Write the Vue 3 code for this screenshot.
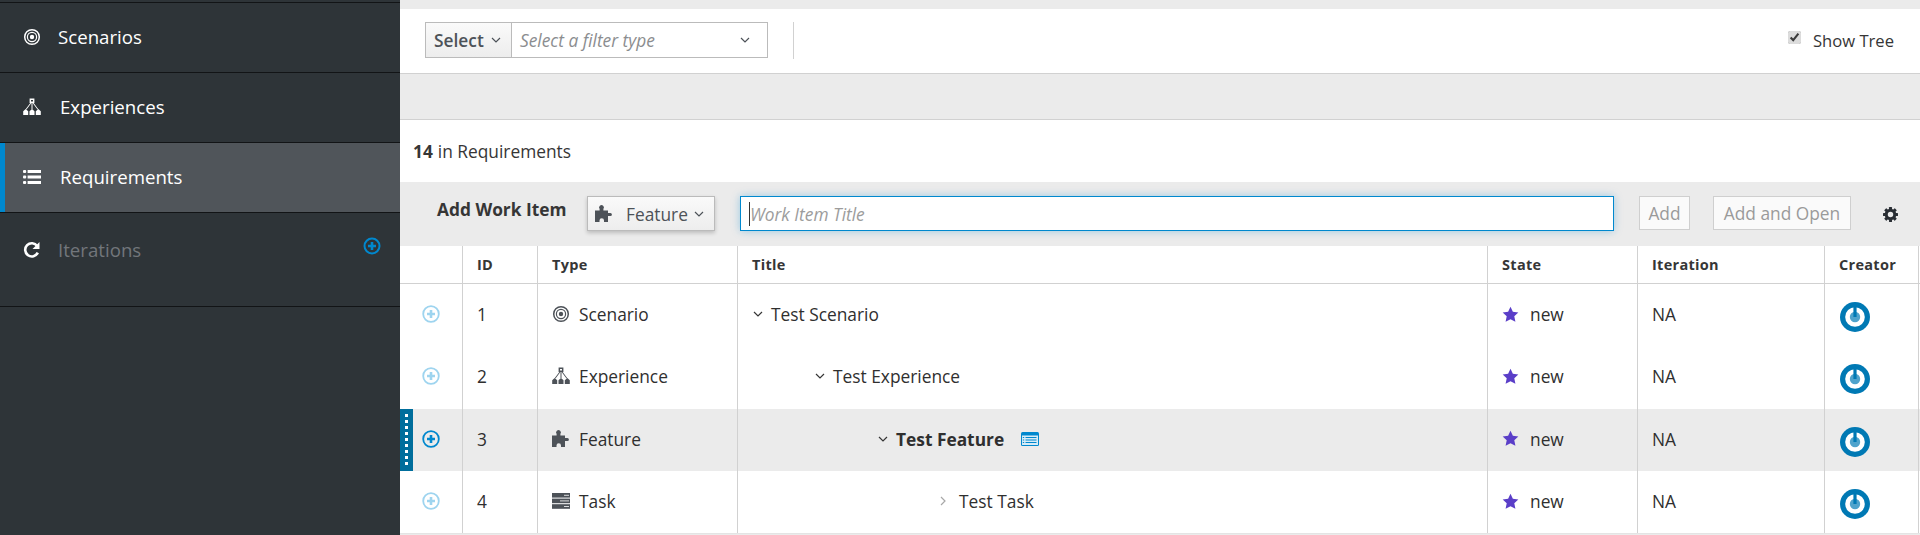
<script setup>
const nav = [
  { label: 'Scenarios', icon: 'target', height: 70 },
  { label: 'Experiences', icon: 'sitemap', height: 70 },
  { label: 'Requirements', icon: 'list', height: 70, active: true },
  { label: 'Iterations', icon: 'repeat', height: 94, muted: true }
];

const columns = ['', 'ID', 'Type', 'Title', 'State', 'Iteration', 'Creator'];

const rows = [
  { id: 1, type: 'Scenario', icon: 'target', title: 'Test Scenario', indent: 0 },
  { id: 2, type: 'Experience', icon: 'sitemap', title: 'Test Experience', indent: 1 },
  { id: 3, type: 'Feature', icon: 'puzzle', title: 'Test Feature', indent: 2, selected: true },
  { id: 4, type: 'Task', icon: 'task', title: 'Test Task', indent: 3, leaf: true }
];

const teeth = [0, 45, 90, 135, 180, 225, 270, 315];
</script>

<template>
  <div class="page">
    <aside class="sidebar">
      <div class="nav-list">
        <div v-for="item in nav" :key="item.label" class="nav-item"
          :class="{ active: item.active, muted: item.muted, ['h' + item.height]: true }">
          <svg class="nav-icon" viewBox="0 0 20 20">
            <use :href="'#i-' + item.icon" />
          </svg>
          <span class="nav-label" :class="item.icon">{{ item.label }}</span>
          <svg v-if="item.muted" class="nav-plus" viewBox="0 0 18 18">
            <circle cx="9" cy="9" r="7.5" fill="none" stroke="currentColor" stroke-width="2" />
            <path d="M9 5v8M5 9h8" stroke="currentColor" stroke-width="2.6" />
          </svg>
        </div>
      </div>
    </aside>

    <main class="content">
      <section class="toolbar">
        <div class="filter">
          <div class="filter-select">Select
            <svg class="chev" viewBox="0 0 10 6"><path d="M1 1l4 4 4-4" /></svg>
          </div>
          <div class="filter-type">
            <span>Select a filter type</span>
            <svg class="chev" viewBox="0 0 10 6"><path d="M1 1l4 4 4-4" /></svg>
          </div>
        </div>
        <div class="divider"></div>
        <label class="show-tree">
          <input type="checkbox" checked />
          <span>Show Tree</span>
        </label>
      </section>

      <div class="band"></div>

      <div class="count"><b>14</b> in Requirements</div>

      <section class="add-bar">
        <span class="add-title">Add Work Item</span>
        <div class="type-btn">
          <svg class="type-icon" viewBox="0 0 20 20"><use href="#i-puzzle" /></svg>
          <span>Feature</span>
          <svg class="chev" viewBox="0 0 10 6"><path d="M1 1l4 4 4-4" /></svg>
        </div>
        <div class="title-input"><i class="caret"></i><span>Work Item Title</span></div>
        <div class="ghost-btn add">Add</div>
        <div class="ghost-btn open">Add and Open</div>
        <svg class="gear" viewBox="0 0 20 20">
          <circle cx="10" cy="10" r="5" fill="none" stroke="currentColor" stroke-width="3.6" />
          <rect v-for="a in teeth" :key="a" x="8.2" y="1.2" width="3.6" height="4" rx="0.6" fill="currentColor"
            :transform="`rotate(${a} 10 10)`" />
        </svg>
      </section>

      <div class="table">
        <div class="row head">
          <div v-for="(c, i) in columns" :key="i" class="cell">{{ c }}</div>
        </div>
        <div v-for="r in rows" :key="r.id" class="row item" :class="{ selected: r.selected }">
          <div class="cell plus-cell">
            <span v-if="r.selected" class="grip"></span>
            <svg class="row-plus" viewBox="0 0 18 18">
              <circle cx="9" cy="9" r="7.8" fill="none" stroke="currentColor" stroke-width="1.8" />
              <path d="M9 5v8M5 9h8" stroke="currentColor" stroke-width="2.6" />
            </svg>
          </div>
          <div class="cell">{{ r.id }}</div>
          <div class="cell type-cell">
            <svg class="row-icon" viewBox="0 0 20 20"><use :href="'#i-' + r.icon" /></svg>
            <span>{{ r.type }}</span>
          </div>
          <div class="cell title-cell" :class="'indent' + r.indent">
            <svg v-if="r.leaf" class="tree-toggle leaf" viewBox="0 0 6 10"><path d="M1 1l4 4-4 4" /></svg>
            <svg v-else class="tree-toggle" viewBox="0 0 10 6"><path d="M1 1l4 4 4-4" /></svg>
            <span class="title-text">{{ r.title }}</span>
            <svg v-if="r.selected" class="detail" viewBox="0 0 18 14">
              <rect width="18" height="14" rx="1.5" fill="#0088ce" />
              <rect x="1" y="3.5" width="16" height="9.5" fill="#d7ecf7" />
              <path d="M4.5 5.5h11M4.5 8h11M4.5 10.5h11M1.8 5.5h1.4M1.8 8h1.4M1.8 10.5h1.4" stroke="#0088ce" stroke-width="1" />
            </svg>
          </div>
          <div class="cell state-cell">
            <svg class="star" viewBox="0 0 18 18">
              <path d="M9 .8l2.5 5.4 5.8.7-4.3 4 1.2 5.9L9 13.9l-5.2 2.9L5 10.9.7 6.9l5.8-.7z" />
            </svg>
            <span>new</span>
          </div>
          <div class="cell">NA</div>
          <div class="cell creator-cell">
            <svg class="avatar" viewBox="0 0 30 30">
              <circle cx="15" cy="15" r="15" fill="#0079b4" />
              <circle cx="15" cy="15" r="9.8" fill="#fff" />
              <circle cx="15" cy="15" r="5.2" fill="#4fa3cc" />
              <path d="M15 5V15" stroke="#0079b4" stroke-width="3.2" />
            </svg>
          </div>
          <div class="cell end"></div>
        </div>
      </div>
    </main>

    <svg class="defs" aria-hidden="true">
      <defs>
        <g id="i-target">
          <circle cx="10" cy="10" r="7.3" fill="none" stroke="currentColor" stroke-width="1.5" />
          <circle cx="10" cy="10" r="4.6" fill="none" stroke="currentColor" stroke-width="1.2" />
          <circle cx="10" cy="10" r="2.2" fill="currentColor" />
        </g>
        <g id="i-sitemap" fill="currentColor">
          <path d="M7.6 1.5h4.8v4.4H7.6zM9 3v1.5h2V3z" fill-rule="evenodd" />
          <path d="M9.5 5.5h1v6.5h-1z" />
          <path d="M8.5 5.7l-4.7 6.4.7.5 4.7-6.4zM11.5 5.7l4.7 6.4-.7.5-4.7-6.4z" />
          <path d="M3.7 12l2.5 2.3V18H1.2v-3.7zM10 12l2.5 2.3V18h-5v-3.7zM16.3 12l2.5 2.3V18h-5v-3.7z" />
        </g>
        <g id="i-list" fill="currentColor">
          <rect x="1" y="3" width="3.2" height="3" rx="1" />
          <rect x="1" y="8.5" width="3.2" height="3" rx="1" />
          <rect x="1" y="14" width="3.2" height="3" rx="1" />
          <rect x="5.6" y="3" width="13.4" height="3" />
          <rect x="5.6" y="8.5" width="13.4" height="3" />
          <rect x="5.6" y="14" width="13.4" height="3" />
        </g>
        <g id="i-repeat">
          <path d="M15.2 6A6.6 6.6 0 1 0 15.8 12.6" fill="none" stroke="currentColor" stroke-width="2.6" />
          <path d="M17.5 2v7h-7z" fill="currentColor" />
        </g>
        <g id="i-puzzle" fill="currentColor">
          <path d="M1 6.5h4.6V5a2.4 2.4 0 1 1 3.8 0v1.5H14V9h2.4a1.5 1.5 0 1 1 0 3H14v6h-4v-1.5a2.2 2.2 0 0 0-4.5 0V18H1z" />
        </g>
        <g id="i-task">
          <rect x="1" y="2" width="18" height="4.6" fill="currentColor" />
          <rect x="1" y="7.6" width="18" height="4.6" fill="currentColor" />
          <rect x="1" y="13.2" width="18" height="4.6" fill="currentColor" />
          <path d="M13 4.3h5M9 9.9h9M13 15.5h5" stroke="#fff" stroke-width="1" opacity="0.8" />
        </g>
      </defs>
    </svg>
  </div>
</template>

<style>
html, body {
  margin: 0;
  background: #fff;
}
</style>

<style scoped>
.page {
  display: flex;
  width: 1920px;
  height: 535px;
  overflow: hidden;
  font-family: "Open Sans", "Liberation Sans", sans-serif;
  color: #363636;
}

.defs {
  position: absolute;
  width: 0;
  height: 0;
}

.sidebar {
  width: 400px;
  flex: none;
  background: #2e3438;
  padding-top: 2px;
  box-sizing: border-box;
}

.nav-list {
  border-top: 1px solid #121416;
}

.nav-item {
  display: flex;
  align-items: center;
  box-sizing: border-box;
  border-bottom: 1px solid #121416;
  padding: 0 0 2px 22px;
  position: relative;
  color: #fff;
  font-size: 18.67px;
}

.h70 {
  height: 70px;
}

.h94 {
  height: 94px;
  padding-bottom: 20px;
}

.nav-item.active {
  background: #50555a;
  box-shadow: inset 5px 0 0 #0088ce;
}

.nav-icon {
  width: 20px;
  height: 20px;
  margin-right: 16px;
  flex: none;
}

.nav-label.sitemap,
.nav-label.list {
  margin-left: 2px;
}

.nav-item.muted .nav-label {
  color: #72767b;
}

.nav-plus {
  position: absolute;
  left: 363px;
  top: 24px;
  width: 18px;
  height: 18px;
  color: #0088ce;
}

.content {
  flex: 1;
  min-width: 0;
  background: #ebebeb;
  display: flex;
  flex-direction: column;
  padding-top: 9px;
}

.toolbar {
  height: 65px;
  flex: none;
  box-sizing: border-box;
  background: #fff;
  border-bottom: 1px solid #d1d1d1;
  display: flex;
  align-items: flex-start;
  padding: 13px 26px 0 25px;
}

.filter {
  display: flex;
  width: 343px;
  height: 36px;
  box-sizing: border-box;
  border: 1px solid #bbb;
  font-size: 17.33px;
}

.filter-select {
  width: 86px;
  box-sizing: border-box;
  border-right: 1px solid #bbb;
  background: linear-gradient(#fafafa, #ededed);
  display: flex;
  align-items: center;
  justify-content: space-between;
  padding: 0 10px 0 8px;
  font-weight: 600;
  color: #4d5258;
}

.filter-type {
  flex: 1;
  display: flex;
  align-items: center;
  justify-content: space-between;
  padding: 0 17px 0 8px;
  font-style: italic;
  color: #8b8d8f;
}

.chev {
  width: 10px;
  height: 6px;
  flex: none;
  fill: none;
  stroke: #4d5258;
  stroke-width: 1.2;
}

.divider {
  width: 1px;
  height: 37px;
  background: #d1d1d1;
  margin-left: 25px;
}

.show-tree {
  margin-left: auto;
  display: flex;
  align-items: center;
  font-size: 16.6px;
  height: 36px;
}

.show-tree input {
  width: 13px;
  height: 13px;
  margin: 0 12px 6px 0;
  accent-color: #dcdcdc;
}

.band {
  height: 46px;
  flex: none;
  box-sizing: border-box;
  background: #ebebeb;
  border-bottom: 1px solid #d1d1d1;
}

.count {
  height: 62px;
  flex: none;
  background: #fff;
  display: flex;
  align-items: center;
  gap: 5px;
  padding-left: 13px;
  font-size: 17.33px;
}

.add-bar {
  height: 64px;
  flex: none;
  background: #ebebeb;
  display: flex;
  align-items: flex-start;
  padding: 14px 0 0 37px;
  box-sizing: border-box;
}

.add-title {
  font-size: 17.33px;
  font-weight: 700;
  line-height: 27px;
  width: 150px;
  flex: none;
  white-space: nowrap;
}

.type-btn {
  width: 128px;
  height: 35px;
  box-sizing: border-box;
  border: 1px solid #bbb;
  background: linear-gradient(#fafafa, #ededed);
  box-shadow: 0 2px 4px rgba(0, 0, 0, 0.2);
  display: flex;
  align-items: center;
  padding: 0 0 0 6px;
  font-size: 17.33px;
  color: #4d5258;
  flex: none;
}

.type-icon {
  width: 20px;
  height: 20px;
  margin-right: 12px;
  flex: none;
}

.type-btn .chev {
  margin-left: 6px;
}

.title-input {
  width: 874px;
  height: 35px;
  margin-left: 25px;
  box-sizing: border-box;
  border: 1px solid #0088ce;
  background: #fff;
  box-shadow: 0 0 8px rgba(0, 136, 206, 0.35);
  display: flex;
  align-items: center;
  padding-left: 8px;
  font-size: 17.33px;
  font-style: italic;
  color: #9c9c9c;
  flex: none;
}

.caret {
  width: 1px;
  height: 24px;
  background: #333;
  flex: none;
}

.ghost-btn {
  height: 34px;
  box-sizing: border-box;
  border: 1px solid #cfcfcf;
  background: #fafafa;
  color: #9a9a9a;
  font-size: 17.33px;
  display: flex;
  align-items: center;
  justify-content: center;
  flex: none;
}

.ghost-btn.add {
  width: 51px;
  margin-left: 25px;
}

.ghost-btn.open {
  width: 138px;
  margin-left: 23px;
}

.gear {
  width: 17px;
  height: 17px;
  margin: 10px 0 0 31px;
  color: #292e34;
  flex: none;
}

.table {
  background: #fff;
  flex: none;
  border-bottom: 1px solid #e4e4e4;
}

.row {
  display: grid;
  grid-template-columns: 63px 75px 200px 750px 150px 187px 94px 1px;
  position: relative;
}

.head {
  height: 38px;
  box-sizing: border-box;
  border-bottom: 1px solid #d1d1d1;
  font-size: 14.5px;
  font-weight: 700;
  letter-spacing: 0.3px;
  color: #363636;
}

.item {
  height: 62.33px;
  font-size: 17.33px;
  color: #2f2f2f;
}

.item.selected {
  background: #ebebeb;
}

.cell {
  display: flex;
  align-items: center;
  box-sizing: border-box;
  padding-left: 14px;
  border-right: 1px solid #d1d1d1;
  min-width: 0;
  white-space: nowrap;
}

.cell.end {
  padding: 0;
  border: 0;
}

.item .cell {
  padding-bottom: 2px;
}

.plus-cell {
  padding-left: 22px;
  position: relative;
}

.creator-cell {
  padding-left: 15px;
}

.grip {
  position: absolute;
  left: 0;
  top: 0;
  bottom: 0;
  width: 13px;
  background: #006e9c;
}

.grip::after {
  content: "";
  position: absolute;
  left: 5px;
  top: 5px;
  bottom: 5px;
  width: 3px;
  background: repeating-linear-gradient(#fff 0 3px, transparent 3px 6px);
}

.row-plus {
  width: 18px;
  height: 18px;
  color: #9ed4ef;
  flex: none;
}

.selected .row-plus {
  color: #0088ce;
}

.type-cell {
  padding-left: 13px;
}

.row-icon {
  width: 20px;
  height: 20px;
  color: #4d5258;
  margin-right: 8px;
  flex: none;
}

.title-cell {
  padding-left: 15px;
}

.indent1 {
  padding-left: 77px;
}

.indent2 {
  padding-left: 140px;
}

.indent3 {
  padding-left: 202px;
}

.tree-toggle {
  width: 10px;
  height: 6px;
  fill: none;
  stroke: #363636;
  stroke-width: 1.2;
  margin-right: 8px;
  flex: none;
}

.tree-toggle.leaf {
  width: 6px;
  height: 10px;
  stroke: #a8a8a8;
  margin-right: 13px;
}

.selected .title-text {
  font-weight: 700;
}

.detail {
  width: 18px;
  height: 14px;
  margin-left: 17px;
  flex: none;
}

.star {
  width: 17px;
  height: 17px;
  fill: #5a3ec8;
  margin-right: 11px;
  flex: none;
}

.avatar {
  width: 30px;
  height: 30px;
  flex: none;
  transform: translateY(3px);
}
</style>
